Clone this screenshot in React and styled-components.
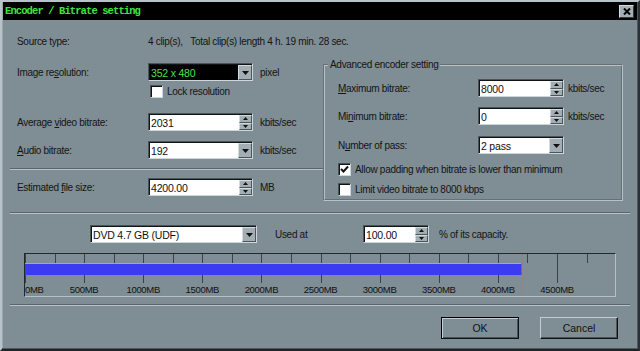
import styled, { createGlobalStyle } from 'styled-components'

const GlobalStyle = createGlobalStyle`
  html, body {
    margin: 0;
    padding: 0;
    background: #7f8d94;
  }
  * {
    box-sizing: border-box;
  }
`

const font = `"Liberation Sans", Arial, sans-serif`

const MB_PX = 532 / 4500

function SpinButtons() {
  return (
    <Spin>
      <SpinHalf>
        <svg width="5" height="3" viewBox="0 0 5 3">
          <path d="M2.5 0 L5 3 L0 3 Z" fill="#111" />
        </svg>
      </SpinHalf>
      <SpinHalf>
        <svg width="5" height="3" viewBox="0 0 5 3">
          <path d="M0 0 L5 0 L2.5 3 Z" fill="#111" />
        </svg>
      </SpinHalf>
    </Spin>
  )
}

function DropButton() {
  return (
    <Drop>
      <svg width="7" height="4" viewBox="0 0 7 4">
        <path d="M0 0 L7 0 L3.5 4 Z" fill="#111" />
      </svg>
    </Drop>
  )
}

function SpinField({ value, width }) {
  return (
    <Field $width={width}>
      <FieldValue>{value}</FieldValue>
      <SpinButtons />
    </Field>
  )
}

function ComboField({ value, width, dark }) {
  return (
    <Field $width={width}>
      <FieldValue $dark={dark}>{value}</FieldValue>
      <DropButton />
    </Field>
  )
}

function CheckBox({ checked, children }) {
  return (
    <CheckRow>
      <Box>
        {checked && (
          <svg width="9" height="9" viewBox="0 0 9 9">
            <path d="M1 4 L3.5 6.5 L8 1.5" stroke="#111" strokeWidth="2" fill="none" />
          </svg>
        )}
      </Box>
      <span>{children}</span>
    </CheckRow>
  )
}

function Ruler() {
  const ticks = []
  for (let i = 0; i <= 19; i++) {
    const mb = i * 250
    const x = Math.round(mb * MB_PX) + 0.5
    const major = i % 2 === 0
    ticks.push(
      <line key={i} x1={x} x2={x} y1={0} y2={major ? 29 : 9} stroke="#3a4246" strokeWidth="1" />
    )
  }
  const labels = []
  for (let mb = 0; mb <= 4500; mb += 500) {
    const x = mb * MB_PX
    labels.push(
      <text
        key={mb}
        x={mb === 0 ? 0 : x}
        y={39}
        textAnchor={mb === 0 ? 'start' : 'middle'}
        fontSize="9.5"
        fontFamily={font}
        fill="#111"
      >
        {mb}MB
      </text>
    )
  }
  const used = 4200 * MB_PX
  return (
    <RulerBox>
      <svg width="590" height="42" viewBox="0 0 590 42">
        {ticks}
        <rect x="0" y="9" width={used} height="12" fill="#3b3bf2" />
        <rect x="0" y="9" width={used} height="1" fill="#9a9cff" />
        <line
          x1={used + 0.5}
          x2={used + 0.5}
          y1="0"
          y2="42"
          stroke="#c2705e"
          strokeDasharray="2 2"
        />
        {labels}
      </svg>
    </RulerBox>
  )
}

export default function App() {
  return (
    <>
      <GlobalStyle />
      <Window>
        <TitleBar>
          <Title>Encoder / Bitrate setting</Title>
          <CloseButton>
            <svg width="8" height="7" viewBox="0 0 8 7">
              <path d="M1 0.5 L7 6.5 M7 0.5 L1 6.5" stroke="#000" strokeWidth="2" />
            </svg>
          </CloseButton>
        </TitleBar>

        <Body>
          <SourceRow>
            <Label $width={131}>Source type:</Label>
            <span>4 clip(s),&nbsp;&nbsp;&nbsp;Total clip(s) length 4 h. 19 min. 28 sec.</span>
          </SourceRow>

          <Main>
            <LeftColumn>
              <Row>
                <Label $width={131}>
                  Image re<u>s</u>olution:
                </Label>
                <ComboField value="352 x 480" width={105} dark />
                <Unit>pixel</Unit>
              </Row>
              <IndentRow $top={3}>
                <CheckBox>Lock resolution</CheckBox>
              </IndentRow>
              <Row $top={15}>
                <Label $width={131}>
                  Average <u>v</u>ideo bitrate:
                </Label>
                <SpinField value="2031" width={105} />
                <Unit>kbits/sec</Unit>
              </Row>
              <Row $top={10}>
                <Label $width={131}>
                  <u>A</u>udio bitrate:
                </Label>
                <ComboField value="192" width={105} />
                <Unit>kbits/sec</Unit>
              </Row>
              <Separator $left={-7} $top={9} />
              <Row $top={8}>
                <Label $width={131}>
                  Estimated <u>f</u>ile size:
                </Label>
                <SpinField value="4200.00" width={105} />
                <Unit>MB</Unit>
              </Row>
            </LeftColumn>

            <Group>
              <Legend>Advanced encoder setting</Legend>
              <Row $top={8}>
                <Label $width={140}>
                  <u>M</u>aximum bitrate:
                </Label>
                <SpinField value="8000" width={86} />
                <Unit $gap={4}>kbits/sec</Unit>
              </Row>
              <Row $top={10}>
                <Label $width={140}>
                  Mi<u>n</u>imum bitrate:
                </Label>
                <SpinField value="0" width={86} />
                <Unit $gap={4}>kbits/sec</Unit>
              </Row>
              <Row $top={11}>
                <Label $width={140}>
                  N<u>u</u>mber of pass:
                </Label>
                <ComboField value="2 pass" width={86} />
              </Row>
              <CheckLine $top={8}>
                <CheckBox checked>Allow padding when bitrate is lower than minimum</CheckBox>
              </CheckLine>
              <CheckLine $top={6}>
                <CheckBox>Limit video bitrate to 8000 kbps</CheckBox>
              </CheckLine>
            </Group>
          </Main>

          <Separator $top={11} />

          <CapacityRow>
            <ComboField value="DVD 4.7 GB (UDF)" width={167} />
            <Label $width={88} $gap={18}>Used at</Label>
            <SpinField value="100.00" width={66} />
            <Unit $gap={10}>% of its capacity.</Unit>
          </CapacityRow>

          <Ruler />

          <Separator $top={7} />

          <ButtonRow>
            <Button $default>OK</Button>
            <Button>Cancel</Button>
          </ButtonRow>
        </Body>
      </Window>
    </>
  )
}

const Window = styled.div`
  width: 640px;
  height: 351px;
  display: flex;
  flex-direction: column;
  background: #7f8d94;
  border-top: 2px solid #b7c3c9;
  border-left: 2px solid #b7c3c9;
  border-right: 2px solid #2b3236;
  border-bottom: 2px solid #1d2326;
  box-shadow: inset -1px -1px 0 #4d585e, inset 1px 1px 0 #9aa7ad;
  font-family: ${font};
  font-size: 10px;
  letter-spacing: -0.3px;
  color: #141414;
  overflow: hidden;
`

const TitleBar = styled.div`
  height: 18px;
  margin: 0 1px;
  background: #000;
  display: flex;
  align-items: center;
  justify-content: space-between;
  padding: 0 3px 0 2px;
`

const Title = styled.span`
  font-family: "Liberation Mono", "DejaVu Sans Mono", monospace;
  font-weight: bold;
  font-size: 10.5px;
  letter-spacing: -0.9px;
  color: #3fe63f;
`

const CloseButton = styled.div`
  width: 15px;
  height: 13px;
  background: #a3afb5;
  border-top: 1px solid #d5dde1;
  border-left: 1px solid #d5dde1;
  border-right: 1px solid #30383c;
  border-bottom: 1px solid #30383c;
  display: flex;
  align-items: center;
  justify-content: center;
`

const Body = styled.div`
  flex: 1;
  display: flex;
  flex-direction: column;
  padding: 0 8px;
`

const SourceRow = styled.div`
  display: flex;
  align-items: center;
  height: 14px;
  margin-top: 14px;
  padding-left: 7px;
`

const Main = styled.div`
  display: flex;
  align-items: flex-start;
  margin-top: 10px;
`

const LeftColumn = styled.div`
  width: 313px;
  padding-left: 7px;
  padding-top: 5px;
  display: flex;
  flex-direction: column;
`

const Row = styled.div`
  display: flex;
  align-items: center;
  height: 18px;
  margin-top: ${(p) => p.$top || 0}px;
`

const IndentRow = styled.div`
  display: flex;
  align-items: center;
  height: 14px;
  padding-left: 133px;
  margin-top: ${(p) => p.$top || 0}px;
`

const CheckLine = styled.div`
  display: flex;
  align-items: center;
  height: 14px;
  margin-top: ${(p) => p.$top || 0}px;
`

const Label = styled.span`
  width: ${(p) => p.$width}px;
  margin-left: ${(p) => p.$gap || 0}px;
  flex-shrink: 0;
  white-space: nowrap;
`

const Unit = styled.span`
  margin-left: ${(p) => (p.$gap === undefined ? 7 : p.$gap)}px;
  white-space: nowrap;
`

const Field = styled.div`
  width: ${(p) => p.$width}px;
  height: 18px;
  flex-shrink: 0;
  display: flex;
  border-top: 1px solid #4a555a;
  border-left: 1px solid #4a555a;
  border-right: 1px solid #cdd6da;
  border-bottom: 1px solid #cdd6da;
  box-shadow: inset 1px 1px 0 #101416;
  padding: 1px 0 0 1px;
  font-size: 10.5px;
  letter-spacing: -0.2px;
`

const FieldValue = styled.div`
  flex: 1;
  display: flex;
  align-items: center;
  padding-left: 1px;
  background: ${(p) => (p.$dark ? '#000' : '#fff')};
  color: ${(p) => (p.$dark ? '#4fe04f' : '#111')};
  white-space: nowrap;
  overflow: hidden;
`

const Spin = styled.div`
  width: 13px;
  display: flex;
  flex-direction: column;
`

const SpinHalf = styled.div`
  flex: 1;
  display: flex;
  align-items: center;
  justify-content: center;
  background: #a2aeb4;
  border-top: 1px solid #d3dbdf;
  border-left: 1px solid #d3dbdf;
  border-right: 1px solid #4a555a;
  border-bottom: 1px solid #4a555a;
`

const Drop = styled.div`
  width: 14px;
  display: flex;
  align-items: center;
  justify-content: center;
  background: #a2aeb4;
  border-top: 1px solid #d3dbdf;
  border-left: 1px solid #d3dbdf;
  border-right: 1px solid #4a555a;
  border-bottom: 1px solid #4a555a;
`

const CheckRow = styled.label`
  display: flex;
  align-items: center;
  gap: 4px;
  white-space: nowrap;
`

const Box = styled.span`
  width: 13px;
  height: 13px;
  background: #fff;
  border-top: 1px solid #4a555a;
  border-left: 1px solid #4a555a;
  border-right: 1px solid #cdd6da;
  border-bottom: 1px solid #cdd6da;
  box-shadow: inset 1px 1px 0 #101416;
  display: flex;
  align-items: center;
  justify-content: center;
`

const Separator = styled.div`
  height: 2px;
  margin-top: ${(p) => p.$top || 0}px;
  margin-left: ${(p) => p.$left || 0}px;
  border-top: 1px solid #59656b;
  border-bottom: 1px solid #b8c4c9;
`

const Group = styled.fieldset`
  width: 300px;
  margin: 0;
  padding: 0 0 3px 13px;
  min-width: 0;
  border: 2px groove #b6c2c8;
`

const Legend = styled.legend`
  padding: 0 2px;
  margin-left: -10px;
  line-height: 13px;
`

const CapacityRow = styled.div`
  display: flex;
  align-items: center;
  height: 18px;
  margin-top: 11px;
  padding-left: 80px;
`

const RulerBox = styled.div`
  width: 592px;
  height: 44px;
  margin: 10px 0 0 14px;
  border-top: 1px solid #22292c;
  border-left: 1px solid #22292c;
  border-right: 1px solid #b4c0c6;
  border-bottom: 1px solid #b4c0c6;
  display: flex;

  svg {
    display: block;
  }
`

const ButtonRow = styled.div`
  display: flex;
  justify-content: flex-end;
  gap: 21px;
  margin-top: 11px;
  padding-right: 12px;
`

const Button = styled.button`
  width: 78px;
  height: 22px;
  font-family: ${font};
  font-size: 10.5px;
  color: #111;
  background: #7f8d94;
  border-top: 1px solid ${(p) => (p.$default ? '#000' : '#c3cdd2')};
  border-left: 1px solid ${(p) => (p.$default ? '#000' : '#c3cdd2')};
  border-right: 1px solid #0e1214;
  border-bottom: 1px solid #0e1214;
  box-shadow: ${(p) =>
    p.$default
      ? 'inset 1px 1px 0 #c3cdd2, inset -1px -1px 0 #4a555a'
      : 'inset -1px -1px 0 #4a555a'};
  padding: 0;
`
